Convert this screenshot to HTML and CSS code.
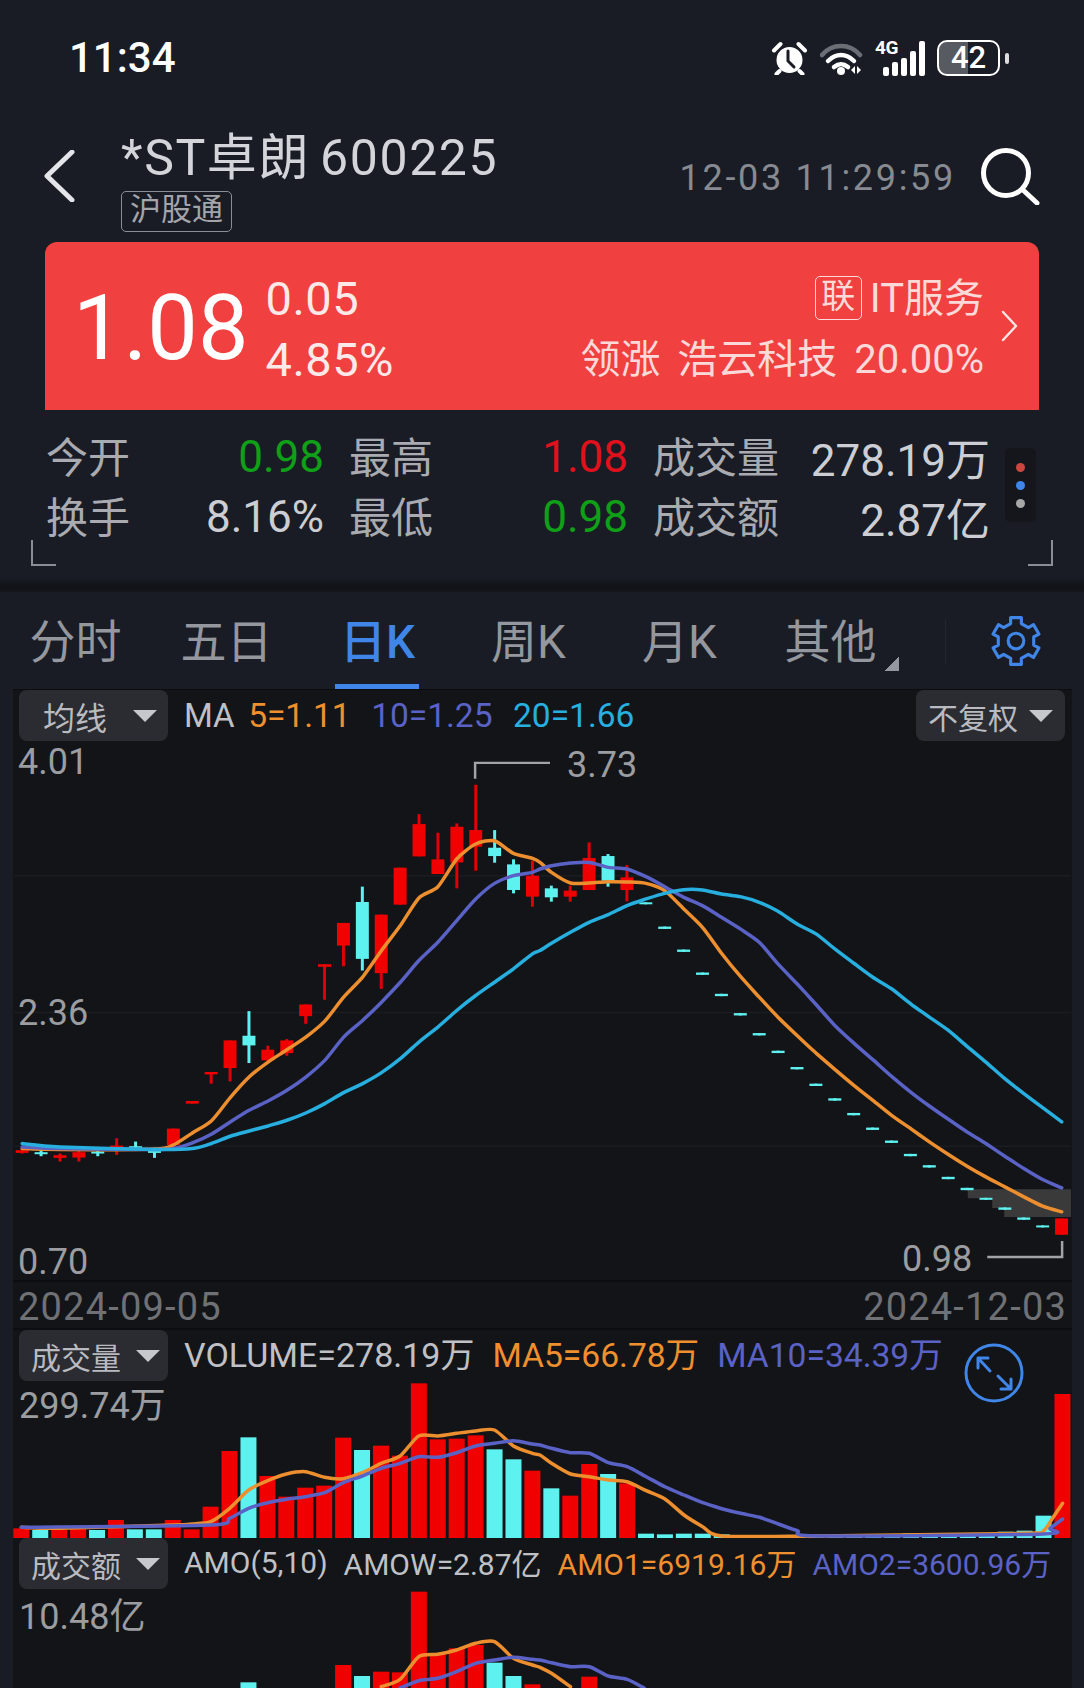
FILE: index.html
```html
<!DOCTYPE html>
<html lang="zh-CN">
<head>
<meta charset="utf-8">
<title>*ST卓朗 600225</title>
<link rel="stylesheet" href="styles.css">
</head>
<body>
<div class="app">
  <div class="status">
    <span class="clock">11:34</span>
    <div class="status-icons">
      <svg class="ic-alarm" viewBox="0 0 37 34"><circle class="face" cx="18.5" cy="19" r="13"/><path class="ears" d="M3 9.500 9.500 3M34 9.500 27.500 3M8.500 30l-3 3M28.500 30l3 3"/><path class="hands" d="M17 10v10l6 6"/></svg>
      <svg class="ic-wifi" viewBox="0 0 44 33"><path class="dim" d="M2 13C12 1 30 1 40 13"/><path d="M8 19c8-8 18-8 26 0M14 25c5-4 9-4 14 0"/><circle class="solid" cx="21" cy="29" r="4"/><path class="solid" d="M35 24v8l-4-4zM37 24v8l4-4z"/></svg>
      <div class="net"><span class="net-label">4G</span>
        <div class="bars"><i class="b1"></i><i class="b2"></i><i class="b3"></i><i class="b4"></i><i class="b5"></i></div>
      </div>
      <div class="battery">42</div><span class="nub"></span>
    </div>
  </div>

  <div class="header">
    <svg class="back" viewBox="0 0 32 52"><path d="M29 2 4 26l25 24"/></svg>
    <div class="title-col">
      <div class="title">*ST卓朗 600225</div>
      <div class="tag">沪股通</div>
    </div>
    <div class="time">12-03 11:29:59</div>
    <svg class="search" viewBox="0 0 61 58"><circle cx="27" cy="26" r="22.500"/><path d="m44 43 14 13"/></svg>
  </div>

  <div class="quote">
    <div class="price">1.08</div>
    <div class="change"><div>0.05</div><div>4.85%</div></div>
    <div class="sector">
      <div class="sector-line"><span class="lian">联</span><span>IT服务</span></div>
      <div class="sector-line leader">领涨 浩云科技 20.00%</div>
    </div>
    <svg class="quote-arrow" viewBox="0 0 18 32"><path d="m2 2 13 14L2 30"/></svg>
  </div>

  <div class="stats">
    <div class="stat-grid">
      <div class="stat"><span>今开</span><b class="green">0.98</b></div>
      <div class="stat"><span>最高</span><b class="red">1.08</b></div>
      <div class="stat"><span>成交量</span><b>278.19万</b></div>
      <div class="stat"><span>换手</span><b>8.16%</b></div>
      <div class="stat"><span>最低</span><b class="green">0.98</b></div>
      <div class="stat"><span>成交额</span><b>2.87亿</b></div>
    </div>
    <div class="dots"><i class="d-red"></i><i class="d-blue"></i><i class="d-grey"></i></div>
    <span class="corner corner-l"></span><span class="corner corner-r"></span>
  </div>

  <div class="band"></div>

  <div class="tabs">
    <div class="tab">分时</div>
    <div class="tab">五日</div>
    <div class="tab active">日K</div>
    <div class="tab">周K</div>
    <div class="tab">月K</div>
    <div class="tab more">其他</div>
    <span class="tab-sep"></span>
    <svg class="gear" viewBox="0 0 48 48"><circle cx="24" cy="24" r="7.500"/><path d="M18.900 7.300 18.800 1.600H29.200L29.100 7.300 35.900 11.200 40.800 8.300 46 17.300 41 20.100V27.900L46 30.700 40.800 39.700 35.900 36.800 29.100 40.700 29.200 46.400H18.800L18.900 40.700 12.100 36.800 7.200 39.700 2 30.700 7 27.900V20.100L2 17.300 7.200 8.300 12.100 11.200Z"/></svg>
  </div>

  <div class="charts">
    <section class="panel panel-k">
      <svg id="plot-k" class="plot" viewBox="13 689 1059 591">
        <path class="grid" d="M13 875H1072M13 1012H1072M13 1146H1072"/>
        <polygon class="shade" points="968.500,1189 1072,1189 1072,1217 1005,1217 1005,1208 993,1208 993,1198 968.500,1198"/>
      </svg>
      <svg class="plot top" viewBox="13 689 1059 591">
        <path class="leader-line" d="M475 778V762H550M988 1257H1063V1241"/>
      </svg>
      <div class="row">
        <div class="btn btn-ma"><span>均线</span><i class="tri"></i></div>
        <div class="legend legend-ma">
          <span class="fg ma-name">MA</span><span class="c-orange">5=1.11</span><span class="c-indigo">10=1.25</span><span class="c-cyan">20=1.66</span>
        </div>
        <div class="btn btn-fq"><span>不复权</span><i class="tri"></i></div>
      </div>
      <span class="axis a-401">4.01</span>
      <span class="axis a-236">2.36</span>
      <span class="axis a-070">0.70</span>
      <span class="axis a-373">3.73</span>
      <span class="axis a-098">0.98</span>
    </section>

    <div class="dates"><span>2024-09-05</span><span>2024-12-03</span></div>

    <section class="panel panel-vol">
      <svg id="plot-vol" class="plot" viewBox="13 1330 1059 208"></svg>
      <div class="row">
        <div class="btn btn-ind"><span>成交量</span><i class="tri"></i></div>
        <div class="legend legend-vol">
          <span class="fg">VOLUME=278.19万</span><span class="c-orange">MA5=66.78万</span><span class="c-indigo">MA10=34.39万</span>
        </div>
      </div>
      <span class="axis a-vol">299.74万</span>
      <svg class="expand" viewBox="0 0 60 62"><circle cx="30" cy="31" r="28"/><path d="M14 16l12 13M14 16v10M14 16h10M47 47 34 34M47 47V37M47 47H37"/></svg>
    </section>

    <section class="panel panel-amo">
      <svg id="plot-amo" class="plot" viewBox="13 1538 1059 150"></svg>
      <div class="row">
        <div class="btn btn-ind"><span>成交额</span><i class="tri"></i></div>
        <div class="legend legend-amo">
          <span class="fg">AMO(5,10)</span><span class="fg">AMOW=2.87亿</span><span class="c-orange">AMO1=6919.16万</span><span class="c-indigo">AMO2=3600.96万</span>
        </div>
      </div>
      <span class="axis a-amo">10.48亿</span>
    </section>
  </div>
</div>
<script src="chart.js"></script>
</body>
</html>
```
FILE: styles.css
```css
* { box-sizing: border-box; }
html, body { margin: 0; padding: 0; background: #191c25; }
body {
  width: 1084px; height: 1688px; overflow: hidden;
  font-family: Roboto, "Noto Sans CJK SC", sans-serif;
  color: #c9cbd1;
}
.app { width: 1084px; height: 1688px; overflow: hidden; }

/* status bar */
.status { height: 114px; display: flex; align-items: center; padding: 2px 0 0 69px; }
.clock { font-size: 42px; font-weight: 500; color: #fff; line-height: 1; }
.status-icons { margin-left: auto; margin-right: 75px; display: flex; align-items: center; }
.ic-alarm { width: 37px; height: 34px; fill: none; stroke-linecap: round; }
.ic-alarm .face { fill: #fff; }
.ic-alarm .ears { stroke: #fff; stroke-width: 4; }
.ic-alarm .hands { stroke: #191c25; stroke-width: 3; fill: none; }
.ic-wifi { width: 44px; height: 33px; margin-left: 12px; fill: none; stroke: #fff; stroke-width: 4.500; stroke-linecap: round; }
.ic-wifi .dim { stroke: #6b6e75; }
.ic-wifi .solid { fill: #fff; stroke: none; }
.net { position: relative; width: 52px; height: 35px; margin-left: 11px; }
.net-label { position: absolute; left: 0; top: -2px; font-size: 19px; font-weight: 700; color: #fff; line-height: 18px; letter-spacing: -0.500px; }
.bars { position: absolute; left: 8px; right: 2px; bottom: 0; top: 0; display: flex; gap: 3px; align-items: flex-end; }
.bars i { display: block; width: 6px; background: #fff; border-radius: 2px; }
.b1 { height: 9px; } .b2 { height: 14px; } .b3 { height: 18px; } .b4 { height: 25px; } .b5 { height: 35px; }
.battery {
  width: 63px; height: 36px; margin-left: 10px; border: 2.500px solid #fff; border-radius: 10px;
  background: linear-gradient(90deg, #575a61 49%, transparent 49%);
  font-size: 31px; font-weight: 500; color: #fff; line-height: 31px; text-align: center;
}
.nub { width: 4px; height: 11px; margin-left: 5px; background: #ddd; border-radius: 2px; }

/* header */
.header { height: 128px; display: flex; align-items: flex-start; padding: 17px 44px 0 43px; }
.back { width: 32px; height: 52px; margin-top: 19px; fill: none; stroke: #e4e5e9; stroke-width: 5; stroke-linecap: round; stroke-linejoin: round; flex: none; }
.title-col { margin-left: 46px; }
.title { font-size: 50px; line-height: 54px; color: #d3d5da; letter-spacing: 1.600px; word-spacing: -4px; white-space: nowrap; }
.tag {
  margin-top: 6px; width: 111px; height: 41px; border: 1.500px solid #8a8d94; border-radius: 5px;
  font-size: 31px; line-height: 36px; text-align: center; color: #a3a5ab;
}
.time { margin-left: auto; margin-top: 27px; font-size: 36px; line-height: 40px; letter-spacing: 2.700px; color: #878a91; white-space: nowrap; }
.search { width: 61px; height: 58px; margin-top: 16px; margin-left: 23px; fill: none; stroke: #fff; stroke-width: 5; stroke-linecap: round; flex: none; }

/* quote card */
.quote {
  width: 994px; height: 168px; margin-left: 45px; background: #f04040;
  border-radius: 12px 12px 0 0; display: flex; align-items: center; padding: 5px 20px 0 28px; color: #fdeaea;
}
.price { font-size: 90px; line-height: 1; color: #fff; }
.change { margin-left: 17px; font-size: 47px; line-height: 61px; letter-spacing: 0.500px; color: #fde9e9; }
.sector { margin-left: auto; display: flex; flex-direction: column; align-items: flex-end; font-size: 40px; color: #fbd9d9; }
.sector-line { height: 61px; line-height: 61px; display: flex; align-items: center; }
.leader { word-spacing: 7px; white-space: nowrap; }
.lian { width: 47px; height: 44px; margin-right: 8px; border: 1.500px solid #fbd9d9; border-radius: 5px; font-size: 34px; line-height: 39px; text-align: center; }
.quote-arrow { width: 18px; height: 32px; margin-left: 17px; margin-top: -5px; fill: none; stroke: #fde3e3; stroke-width: 2.500; stroke-linecap: round; stroke-linejoin: round; flex: none; }

/* stats */
.stats { position: relative; height: 167px; display: flex; align-items: flex-start; padding: 17px 0 0 46px; }
.stat-grid { display: grid; grid-template-columns: 278px 279px 337px; column-gap: 25px; grid-auto-rows: 60px; }
.stat { display: flex; justify-content: space-between; align-items: center; font-size: 42px; color: #a9abb1; white-space: nowrap; }
.stat span { margin-bottom: 6px; }
.stat b { font-weight: 400; font-size: 44px; color: #ccced3; }
.stat b.green { color: #0fa018; }
.stat b.red { color: #e0111c; }
.dots { width: 31px; height: 74px; margin-left: 15px; margin-top: 21px; background: #14161c; border-radius: 6px; display: flex; flex-direction: column; align-items: center; justify-content: center; gap: 9px; }
.dots i { display: block; width: 9px; height: 9px; border-radius: 50%; }
.d-red { background: #c8473f; } .d-blue { background: #3f86e8; } .d-grey { background: #a8a8a8; }
.corner { position: absolute; width: 25px; height: 26px; top: 130px; border-bottom: 2px solid #8a8d94; }
.corner-l { left: 31px; border-left: 2px solid #8a8d94; }
.corner-r { left: 1028px; border-right: 2px solid #8a8d94; }

.band { height: 15px; background: linear-gradient(180deg, #191c25, #111318 60%, #13151b); }

/* tabs */
.tabs { position: relative; height: 97px; display: flex; align-items: stretch; }
.tab { position: relative; width: 151px; text-align: center; font-size: 46px; line-height: 100px; color: #94979d; }
.tab.active { color: #3f86e8; font-weight: 500; }
.tab.active::after { content: ""; position: absolute; left: 33px; width: 84px; bottom: 0; height: 5px; background: #3f86e8; }
.tab.more::after { content: ""; position: absolute; left: 130px; top: 65px; width: 14px; height: 14px; background: linear-gradient(135deg, transparent 50%, #94979d 50%); }
.tab-sep { width: 1px; height: 44px; margin-top: 28px; margin-left: 39px; background: #24272f; }
.gear { width: 50px; height: 50px; margin-top: 24px; margin-left: 45px; fill: none; stroke: #3f86e8; stroke-width: 3; stroke-linejoin: round; }

/* chart stack */
.charts { margin-left: 13px; width: 1059px; background: #131418; border-top: 1px solid #0c0d10; }
.panel { position: relative; }
.panel-k { height: 590px; }
.panel-vol { height: 208px; }
.panel-amo { height: 150px; }
.plot { position: absolute; left: 0; top: 0; width: 1059px; height: 100%; }
.plot.top { pointer-events: none; }
.grid { stroke: #1b1c20; stroke-width: 1.500; fill: none; }
.shade { fill: #3a3a3a; }
.leader-line { fill: none; stroke: #a2a3a6; stroke-width: 2.500; }
.up { fill: #f10000; }
.down { fill: #5df2ef; }
.wick-up { stroke: #e00008; stroke-width: 3; }
.wick-down { stroke: #5df2ef; stroke-width: 3; }
.line { fill: none; stroke-width: 3.500; stroke-linejoin: round; stroke-linecap: round; }
.l-orange { stroke: #ed8f2f; }
.l-indigo { stroke: #5a62c6; }
.l-cyan { stroke: #27afe0; }

.row { position: relative; display: flex; align-items: flex-start; padding: 0 7px 0 6px; height: 51px; }
.btn { display: flex; align-items: center; height: 51px; width: 149px; background: #2a2c31; border-radius: 8px; color: #b9bbc0; flex: none; }
.btn-ma { padding-left: 24px; font-size: 32px; }
.btn-ma .tri { margin-left: 26px; }
.btn-fq { margin-left: auto; padding-left: 12px; font-size: 30px; }
.btn-fq .tri { margin-left: 11px; }
.btn-ind { padding-left: 12px; font-size: 30px; }
.btn-ind .tri { margin-left: 15px; }
.tri { width: 0; height: 0; border-left: 12px solid transparent; border-right: 12px solid transparent; border-top: 12px solid #c6c8cc; }
.legend { display: flex; align-items: center; height: 51px; margin-left: 16px; font-size: 34px; white-space: nowrap; gap: 20px; }
.legend-ma { font-size: 33.500px; gap: 20.500px; }
.ma-name { margin-right: -7px; font-size: 33px; }
.legend-vol { gap: 18px; height: 45px; }
.legend-vol .c-orange, .legend-vol .c-indigo { font-size: 33.600px; }
.legend-amo { gap: 16px; font-size: 30px; height: 48px; }
.fg { color: #bfc1c6; }
.c-orange { color: #ef8f2e; }
.c-indigo { color: #5a62c6; }
.c-cyan { color: #27afe0; }

.axis { position: absolute; font-size: 36px; line-height: 40px; color: #9b9da1; white-space: nowrap; }
.a-401 { left: 5px; top: 52px; }
.a-236 { left: 5px; top: 303px; }
.a-070 { left: 5px; top: 552px; }
.a-373 { left: 554px; top: 55px; }
.a-098 { left: 889px; top: 549px; }
.a-vol { left: 6px; top: 56px; }
.a-amo { left: 6px; top: 59px; }

.dates { height: 50px; display: flex; justify-content: space-between; padding: 0 5px; font-size: 38px; line-height: 50px; letter-spacing: 1.200px; color: #6f7175; border-top: 2px solid #0c0d10; border-bottom: 2px solid #0c0d10; }
.expand { position: absolute; left: 951px; top: 12px; width: 60px; height: 62px; fill: none; stroke: #3f86e8; stroke-width: 3; stroke-linecap: round; stroke-linejoin: round; }
```
FILE: chart.js
```js
(function () {
  var NS = 'http://www.w3.org/2000/svg';
  function add(svg, tag, attrs) {
    var el = document.createElementNS(NS, tag);
    for (var k in attrs) el.setAttribute(k, attrs[k]);
    svg.appendChild(el);
  }
  function cx(i) { return 21.3 + 18.93 * i; }

  // candles: [up?, wickTop, bodyTop, bodyBottom, wickBottom]; first 28 in offset 760, rest in offset 800 (thirds of a px)
  var A = [
    [1,1165,1170,1178,1180],[0,1165,1176,1182,1188],[1,1180,1185,1193,1204],[1,1172,1176,1192,1204],
    [0,1170,1174,1180,1188],[1,1134,1156,1166,1184],[0,1144,1158,1165,1170],[0,1162,1165,1178,1193],
    [1,1105,1105,1155,1170],[1,1022,1022,1030,1030],[1,935,935,942,970],[1,840,840,923,963],
    [0,752,826,855,908],[1,856,868,900,905],[1,836,840,878,886],[1,732,732,767,790],
    [1,611,611,619,718],[1,487,487,555,617],[0,378,424,595,630],[1,462,462,638,685],
    [1,321,321,432,432],[1,160,190,287,287],[1,216,296,340,340],[1,188,198,305,383],
    [1,72,208,258,330],[0,208,261,286,306],[0,296,311,388,398],[1,300,345,408,438]
  ];
  var B = [
    [0,255,263,290,303],[1,255,270,288,303],[1,125,172,268,268],[0,160,166,240,258],[1,193,230,268,302],
    [0,305,305,311,311],[0,378,378,385,385],[0,447,447,454,454],[0,516,516,523,523],[0,580,580,587,587],
    [0,638,638,645,645],[0,698,698,705,705],[0,751,751,758,758],[0,800,800,807,807],[0,850,850,857,857],
    [0,894,894,901,901],[0,938,938,945,945],[0,982,982,989,989],[0,1021,1021,1028,1028],[0,1061,1061,1068,1068],
    [0,1095,1095,1102,1102],[0,1130,1130,1137,1137],[0,1163,1163,1170,1170],[0,1193,1193,1199,1199],
    [0,1222,1222,1229,1229],[0,1252,1252,1259,1259],[0,1276,1276,1282,1282],[1,1255,1255,1304,1304]
  ];
  var k = document.getElementById('plot-k');
  function candle(c, i, off) {
    var x = cx(i), y = function (z) { return off + z / 3; };
    add(k, 'line', { x1: x, x2: x, y1: y(c[1]), y2: y(c[4]), 'class': c[0] ? 'wick-up' : 'wick-down' });
    add(k, 'rect', { x: x - 6.5, width: 13, y: y(c[2]), height: Math.max(2, y(c[3]) - y(c[2])), 'class': c[0] ? 'up' : 'down' });
  }
  A.forEach(function (c, i) { candle(c, i, 760); });
  B.forEach(function (c, i) { candle(c, i + 28, 800); });

  // left points use scale 2.904, right points 540 + x / 2.882
  function pts(left, right, y1, y2) {
    var out = [];
    for (var i = 0; i < left.length; i += 2) out.push([left[i] / 2.904, y1 + left[i + 1] / 3]);
    for (var j = 0; j < right.length; j += 2) out.push([540 + right[j] / 2.882, y2 + right[j + 1] / 3]);
    return out;
  }
  // Catmull-Rom through the sampled averages
  function line(svg, cls, p) {
    var d = 'M' + p[0][0].toFixed(1) + ' ' + p[0][1].toFixed(1);
    for (var i = 0; i < p.length - 1; i++) {
      var a = p[Math.max(i - 1, 0)], b = p[i], c = p[i + 1], e = p[Math.min(i + 2, p.length - 1)];
      var c1x = b[0] + (c[0] - a[0]) / 8, c1y = b[1] + (c[1] - a[1]) / 8;
      var c2x = c[0] - (e[0] - b[0]) / 8, c2y = c[1] - (e[1] - b[1]) / 8;
      d += 'C' + c1x.toFixed(1) + ' ' + c1y.toFixed(1) + ' ' + c2x.toFixed(1) + ' ' + c2y.toFixed(1) + ' ' + c[0].toFixed(1) + ' ' + c[1].toFixed(1);
    }
    add(svg, 'path', { d: d, 'class': 'line ' + cls });
  }

  line(k, 'l-orange', pts(
    [62,1165,172,1168,447,1166,500,1155,557,1118,612,1082,667,1012,722,950,777,905,832,868,887,830,942,782,997,710,1052,650,1107,570,1162,495,1216,412,1271,378,1326,295,1381,250,1436,240,1491,278,1546,293],
    [0,185,33,215,88,247,142,247,197,243,251,244,306,248,360,270,415,325,469,380,524,458,578,527,633,590,687,650,742,705,797,758,851,807,906,855,961,900,1015,945,1070,985,1124,1025,1179,1063,1233,1098,1287,1130,1342,1160,1397,1190,1451,1218,1506,1235], 760, 800));
  line(k, 'l-indigo', pts(
    [62,1160,172,1165,447,1168,502,1165,557,1148,612,1122,667,1085,722,1050,777,1022,832,990,887,950,942,900,997,830,1052,780,1107,725,1162,665,1216,600,1271,545,1326,480,1381,415,1436,368,1491,345,1546,335],
    [0,205,33,195,88,187,142,185,197,200,251,205,306,228,360,258,415,290,469,315,524,350,578,385,633,425,687,490,742,550,797,612,851,675,906,728,961,778,1015,828,1070,875,1124,917,1179,957,1233,995,1287,1030,1342,1068,1397,1105,1451,1138,1506,1163], 760, 800));
  line(k, 'l-cyan', pts(
    [62,1150,172,1160,447,1168,557,1165,612,1150,667,1128,722,1112,777,1097,832,1080,887,1058,942,1030,997,997,1052,970,1107,937,1162,895,1216,845,1271,800,1326,750,1381,705,1436,665,1491,625,1546,580],
    [0,450,33,428,88,395,142,365,197,342,251,315,306,295,360,278,415,267,469,268,524,280,578,288,633,305,687,332,742,370,797,400,851,445,906,488,961,530,1015,565,1070,610,1124,650,1179,690,1233,738,1287,785,1342,835,1397,880,1451,922,1506,965], 760, 800));

  // volume bars: [up?, top] in thirds of a px from 1320
  var V = [
    [1,625],[0,630],[1,628],[1,625],[0,630],[1,600],[0,628],[0,628],[1,600],[1,628],[1,560],[1,393],[0,352],[1,468],
    [1,530],[1,503],[1,497],[1,353],[0,390],[1,377],[1,407],[1,190],[1,358],[1,356],[1,346],[0,388],[0,418],[1,452],
    [0,505],[1,527],[1,432],[0,462],[1,490],[0,641],[0,643],[0,641],[0,641],[0,643],[0,648],[0,648],[0,648],[0,648],
    [0,648],[0,648],[0,648],[0,646],[0,644],[0,640],[0,645],[0,646],[0,646],[0,643],[0,635],[0,632],[0,587],[1,222]
  ];
  var vol = document.getElementById('plot-vol');
  V.forEach(function (b, i) {
    var y = 1320 + b[1] / 3;
    add(vol, 'rect', { x: cx(i) - 8, width: 16, y: y, height: 1538 - y, 'class': b[0] ? 'up' : 'down' });
  });
  line(vol, 'l-orange', pts(
    [62,622,172,625,502,615,557,612,612,605,667,565,722,510,777,482,832,462,887,455,942,472,997,476,1052,458,1107,430,1162,408,1216,348,1271,348,1326,340,1381,333,1436,330,1491,378,1546,400],
    [0,405,33,430,88,462,142,470,197,480,251,485,306,512,360,537,415,585,469,620,524,648,797,648,1397,640,1451,632,1480,590,1506,550], 1320, 1320));
  line(vol, 'l-indigo', pts(
    [62,622,612,615,667,595,722,565,777,548,832,538,887,530,942,518,997,488,1052,468,1107,445,1162,430,1216,410,1271,412,1326,398,1381,378,1436,370,1491,362,1546,372],
    [0,375,33,385,88,398,142,400,197,428,251,440,306,470,360,500,415,525,469,548,524,566,578,580,633,592,687,612,742,632,797,648,1451,642,1470,625,1506,597], 1320, 1320));

  // amount bars: only the tops of the tallest reach the visible strip
  var M = { 12: [0,1087], 17: [1,1035], 18: [0,1068], 19: [1,1055], 20: [1,1057], 21: [1,815], 22: [1,1000], 23: [1,985], 24: [1,975], 25: [0,1028], 26: [0,1068], 27: [1,1093], 30: [1,1070] };
  var amo = document.getElementById('plot-amo');
  Object.keys(M).forEach(function (i) {
    var y = 1320 + M[i][1] / 3;
    add(amo, 'rect', { x: cx(+i) - 8, width: 16, y: y, height: 1688 - y, 'class': M[i][0] ? 'up' : 'down' });
  });
  line(amo, 'l-orange', pts(
    [1107,1100,1162,1078,1216,1010,1271,1003,1326,990,1381,970,1436,965,1491,1015,1546,1035],
    [0,1042,33,1060,88,1100], 1320, 1320));
  line(amo, 'l-indigo', pts(
    [1162,1104,1216,1082,1271,1075,1326,1055,1381,1030,1436,1020,1491,1012,1546,1018],
    [0,1020,33,1028,88,1040,142,1040,197,1068,251,1078,300,1104], 1320, 1320));
})();
```
